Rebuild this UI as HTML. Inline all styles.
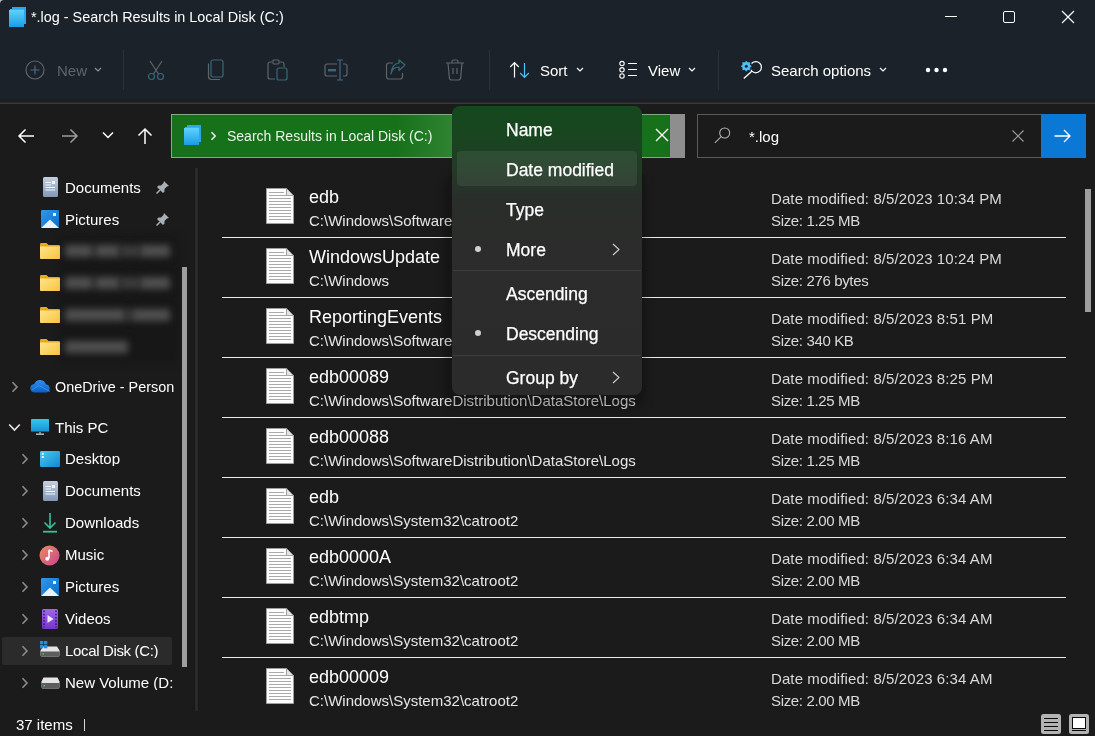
<!DOCTYPE html>
<html><head><meta charset="utf-8"><style>
html,body{margin:0;padding:0;width:1095px;height:736px;overflow:hidden;background:#1b1b1b;font-family:"Liberation Sans", sans-serif}
.t{position:absolute;white-space:nowrap;will-change:transform}
svg{display:block}
</style></head><body>
<div style="position:absolute;left:0;top:0;width:1095px;height:103px;background:#1c2229"></div><div style="position:absolute;left:0;top:99px;width:1095px;height:3px;background:#1c2024"></div><div style="position:absolute;left:0;top:102px;width:1095px;height:1px;background:#25292c"></div><div style="position:absolute;left:0;top:103px;width:1095px;height:1px;background:#373a3d"></div><svg style="position:absolute;left:8px;top:6px" width="20" height="22" viewBox="0 0 20 22">
<defs><linearGradient id="gb" x1="0" y1="0" x2="0" y2="1"><stop offset="0" stop-color="#5fd3fb"/><stop offset="1" stop-color="#1a9be6"/></linearGradient></defs>
<rect x="4" y="1" width="14" height="17" fill="#2aa6ea"/>
<rect x="2" y="3" width="14" height="17" fill="#37b3f0"/>
<rect x="1" y="4" width="15" height="17" fill="url(#gb)"/>
</svg><div class="t" style="left:31px;top:10.41px;font-size:14.4px;line-height:14.4px;color:#ffffff;">*.log - Search Results in Local Disk (C:)</div>
<div style="position:absolute;left:945px;top:16px;width:12px;height:1px;background:#fff"></div><div style="position:absolute;left:1003px;top:11px;width:10px;height:10px;border:1px solid #fff;border-radius:2px"></div><svg style="position:absolute;left:1061px;top:10px" width="14" height="14" viewBox="0 0 14 14"><path d="M1 1L13 13M13 1L1 13" stroke="#fff" stroke-width="1.2"/></svg><svg style="position:absolute;left:25px;top:60px" width="20" height="20" viewBox="0 0 20 20"><circle cx="10" cy="10" r="9" fill="none" stroke="#5f656c" stroke-width="1.2"/><path d="M10 5.5V14.5M5.5 10H14.5" stroke="#4b6b80" stroke-width="1.2"/></svg><div class="t" style="left:57px;top:62.70px;font-size:15px;line-height:15px;color:#5f656c;">New</div>
<svg style="position:absolute;left:94px;top:67px" width="8" height="5" viewBox="0 0 8 5"><path d="M1 1L4 4L7 1" fill="none" stroke="#8a9098" stroke-width="1.2"/></svg><div style="position:absolute;left:123px;top:50px;width:1px;height:40px;background:#2c3138"></div><svg style="position:absolute;left:146px;top:59px" width="20" height="22" viewBox="0 0 20 22"><path d="M4 2L12.5 15M16 2L7.5 15" stroke="#5f656c" stroke-width="1.2" fill="none"/><circle cx="5.5" cy="17.5" r="3" stroke="#356a7a" stroke-width="1.2" fill="none"/><circle cx="14.5" cy="17.5" r="3" stroke="#356a7a" stroke-width="1.2" fill="none"/></svg><svg style="position:absolute;left:207px;top:59px" width="18" height="22" viewBox="0 0 18 22"><rect x="4" y="1" width="12" height="17" rx="2" stroke="#356a7a" stroke-width="1.2" fill="none"/><path d="M1.5 4.5V17.5A3 3 0 0 0 4.5 20.5H13" stroke="#5f656c" stroke-width="1.2" fill="none"/></svg><svg style="position:absolute;left:267px;top:59px" width="22" height="22" viewBox="0 0 22 22"><path d="M5 3H3A2 2 0 0 0 1 5V18A2 2 0 0 0 3 20H8" stroke="#5f656c" stroke-width="1.2" fill="none"/><path d="M13 3H15A2 2 0 0 1 17 5V8" stroke="#5f656c" stroke-width="1.2" fill="none"/><rect x="6" y="1" width="6" height="4" rx="1" stroke="#5f656c" stroke-width="1.2" fill="none"/><rect x="10" y="9" width="10" height="12" rx="2" stroke="#356a7a" stroke-width="1.2" fill="none"/></svg><svg style="position:absolute;left:324px;top:59px" width="24" height="22" viewBox="0 0 24 22"><path d="M13 5H3A2 2 0 0 0 1 7V15A2 2 0 0 0 3 17H13" stroke="#5f656c" stroke-width="1.2" fill="none"/><path d="M19 5H21A2 2 0 0 1 23 7V15A2 2 0 0 1 21 17H19" stroke="#5f656c" stroke-width="1.2" fill="none"/><path d="M16 1V21M13 1H19M13 21H19" stroke="#3f6a8a" stroke-width="1.2"/><rect x="4" y="10" width="8" height="2.4" fill="#356a7a"/></svg><svg style="position:absolute;left:385px;top:59px" width="22" height="22" viewBox="0 0 22 22"><path d="M8 4H4A2.5 2.5 0 0 0 1.5 6.5V17.5A2.5 2.5 0 0 0 4 20H15A2.5 2.5 0 0 0 17.5 17.5V14" stroke="#5f656c" stroke-width="1.2" fill="none"/><path d="M6 15C7 10 10 8 14 8V11.5L20 6L14 1V4C9 4.5 6.5 8.5 6 15Z" stroke="#356a7a" stroke-width="1.2" fill="none" stroke-linejoin="round"/></svg><svg style="position:absolute;left:445px;top:59px" width="20" height="22" viewBox="0 0 20 22"><path d="M1 4H19M7 4V2.5A1.5 1.5 0 0 1 8.5 1H11.5A1.5 1.5 0 0 1 13 2.5V4" stroke="#5f656c" stroke-width="1.2" fill="none"/><path d="M3 4L4.3 18.5A2.5 2.5 0 0 0 6.8 21H13.2A2.5 2.5 0 0 0 15.7 18.5L17 4" stroke="#5f656c" stroke-width="1.2" fill="none"/><path d="M8 9V15M12 9V15" stroke="#5f656c" stroke-width="1.2"/></svg><div style="position:absolute;left:489px;top:50px;width:1px;height:40px;background:#2c3138"></div><svg style="position:absolute;left:509px;top:61px" width="24" height="18" viewBox="0 0 24 18"><path d="M5.5 16.5V1.6M1.2 6L5.5 1.5L9.8 6" stroke="#ffffff" stroke-width="1.2" fill="none"/><path d="M15.5 2V16.4M11.2 12L15.5 16.5L19.8 12" stroke="#4cc2ff" stroke-width="1.2" fill="none"/></svg><div class="t" style="left:540px;top:62.70px;font-size:15px;line-height:15px;color:#ffffff;">Sort</div>
<svg style="position:absolute;left:576px;top:67px" width="8" height="5" viewBox="0 0 8 5"><path d="M1 1L4 4L7 1" fill="none" stroke="#ffffff" stroke-width="1.2"/></svg><svg style="position:absolute;left:618px;top:60px" width="20" height="20" viewBox="0 0 20 20"><circle cx="4" cy="3.6" r="2.2" stroke="#fff" stroke-width="1.1" fill="none"/><circle cx="4" cy="9.8" r="2.2" stroke="#fff" stroke-width="1.1" fill="none"/><circle cx="4" cy="16" r="2.2" stroke="#fff" stroke-width="1.1" fill="none"/><path d="M10 3.5H19M10 9.5H19M10 15.5H19" stroke="#fff" stroke-width="1"/></svg><div class="t" style="left:648px;top:62.70px;font-size:15px;line-height:15px;color:#ffffff;">View</div>
<svg style="position:absolute;left:688px;top:67px" width="8" height="5" viewBox="0 0 8 5"><path d="M1 1L4 4L7 1" fill="none" stroke="#ffffff" stroke-width="1.2"/></svg><div style="position:absolute;left:718px;top:50px;width:1px;height:40px;background:#2c3138"></div><svg style="position:absolute;left:740px;top:59px" width="24" height="22" viewBox="0 0 24 22"><circle cx="15.8" cy="8.2" r="5.6" stroke="#fff" stroke-width="1.2" fill="none"/><path d="M11.8 12.3L3.8 19.5" stroke="#fff" stroke-width="1.3"/><circle cx="6.3" cy="7.2" r="6" fill="#1c2229"/><path d="M6.30 2.20L7.68 3.87L9.84 3.66L9.63 5.82L11.30 7.20L9.63 8.58L9.84 10.74L7.68 10.53L6.30 12.20L4.92 10.53L2.76 10.74L2.97 8.58L1.30 7.20L2.97 5.82L2.76 3.66L4.92 3.87Z" fill="#4cc2ff" stroke="#4cc2ff" stroke-width="0.8" stroke-linejoin="round"/><circle cx="6.3" cy="7.2" r="1.5" fill="#1c2229"/></svg><div class="t" style="left:771px;top:62.70px;font-size:15px;line-height:15px;color:#ffffff;">Search options</div>
<svg style="position:absolute;left:879px;top:67px" width="8" height="5" viewBox="0 0 8 5"><path d="M1 1L4 4L7 1" fill="none" stroke="#ffffff" stroke-width="1.2"/></svg><svg style="position:absolute;left:925px;top:67px" width="23" height="6" viewBox="0 0 23 6"><circle cx="3" cy="3" r="2.2" fill="#fff"/><circle cx="11.5" cy="3" r="2.2" fill="#fff"/><circle cx="20" cy="3" r="2.2" fill="#fff"/></svg><div style="position:absolute;left:0;top:104px;width:1095px;height:632px;background:#1b1b1b"></div><svg style="position:absolute;left:17px;top:127px" width="18" height="18" viewBox="0 0 18 18"><path d="M17 9H2M8.5 2.5L2 9L8.5 15.5" stroke="#fff" stroke-width="1.5" fill="none"/></svg><svg style="position:absolute;left:61px;top:127px" width="18" height="18" viewBox="0 0 18 18"><path d="M1 9H16M9.5 2.5L16 9L9.5 15.5" stroke="#9c9c9c" stroke-width="1.5" fill="none"/></svg><svg style="position:absolute;left:102px;top:131px" width="12" height="8" viewBox="0 0 12 8"><path d="M1 1.5L6 6.5L11 1.5" stroke="#fff" stroke-width="1.5" fill="none"/></svg><svg style="position:absolute;left:136px;top:127px" width="18" height="18" viewBox="0 0 18 18"><path d="M9 17V2M2.5 8.5L9 2L15.5 8.5" stroke="#fff" stroke-width="1.5" fill="none"/></svg><div style="position:absolute;left:171px;top:114px;width:514px;height:44px;background:#8e8e8e;box-sizing:border-box"></div><div style="position:absolute;left:171px;top:114px;width:499px;height:44px;background:#17701a;box-sizing:border-box;border:1px solid #86a886;border-right:none"></div><div style="position:absolute;left:395px;top:115px;width:57px;height:42px;background:linear-gradient(90deg,rgba(110,180,110,0) 0%,rgba(110,180,110,0.28) 100%)"></div><svg style="position:absolute;left:183px;top:124px" width="20" height="22" viewBox="0 0 20 22">
<rect x="4" y="1" width="14" height="17" fill="#2aa6ea"/>
<rect x="2" y="3" width="14" height="17" fill="#37b3f0"/>
<rect x="1" y="4" width="15" height="17" fill="url(#gb)"/>
</svg><svg style="position:absolute;left:210px;top:131px" width="8" height="10" viewBox="0 0 8 10"><path d="M1.5 1.3L5.2 5L1.5 8.7" stroke="#f0f0f0" stroke-width="1.5" fill="none"/></svg><div class="t" style="left:227px;top:128.55px;font-size:14px;line-height:14px;color:#e8f6e8;">Search Results in Local Disk (C:)</div>
<svg style="position:absolute;left:655px;top:128px" width="14" height="14" viewBox="0 0 14 14"><path d="M1 1L13 13M13 1L1 13" stroke="#fff" stroke-width="1.4"/></svg><div style="position:absolute;left:697px;top:114px;width:344px;height:44px;box-sizing:border-box;border:1px solid #5a5a5a;border-right:none;background:#1b1b1b"></div><svg style="position:absolute;left:713px;top:127px" width="18" height="17" viewBox="0 0 18 17"><circle cx="11.7" cy="6" r="5" stroke="#b0b0b0" stroke-width="1.1" fill="none"/><path d="M8.2 9.6L1.8 15.8" stroke="#b0b0b0" stroke-width="1.1"/></svg><div class="t" style="left:748.5px;top:129.30px;font-size:15px;line-height:15px;color:#ffffff;">*.log</div>
<svg style="position:absolute;left:1012px;top:130px" width="12" height="12" viewBox="0 0 12 12"><path d="M0.5 0.5L11.5 11.5M11.5 0.5L0.5 11.5" stroke="#9a9a9a" stroke-width="1.2"/></svg><div style="position:absolute;left:1041px;top:114px;width:45px;height:44px;background:#0b78d6"></div><svg style="position:absolute;left:1054px;top:129px" width="17" height="14" viewBox="0 0 17 14"><path d="M0.5 7H16M10 1L16 7L10 13" stroke="#fff" stroke-width="1.3" fill="none"/></svg><div style="position:absolute;left:194px;top:168px;width:5px;height:543px;background:#171717"></div><div style="position:absolute;left:195px;top:168px;width:3px;height:543px;background:#2a2a2a"></div><svg style="position:absolute;left:43px;top:177px" width="15" height="20" viewBox="0 0 15 20"><defs><linearGradient id="gd177" x1="0" y1="0" x2="0" y2="1"><stop offset="0" stop-color="#c3d0df"/><stop offset="1" stop-color="#8497b3"/></linearGradient></defs><rect x="0" y="0" width="15" height="20" rx="1.5" fill="url(#gd177)"/><path d="M2.5 5.5H8M2.5 8H8M2.5 10.5H12M2.5 13H12" stroke="#f2f6fb" stroke-width="1.1"/><rect x="9" y="4" width="3" height="3" fill="#f2f6fb"/></svg><div class="t" style="left:65px;top:179.50px;font-size:15px;line-height:15px;color:#ffffff;">Documents</div>
<svg style="position:absolute;left:156px;top:180px" width="14" height="14" viewBox="0 0 14 14"><path d="M8 1L13 6L11 6.5L8.5 9L8.5 11.5L7 13L1 7L2.5 5.5L5 5.5L7.5 3L8 1Z" fill="#a9b0b5"/><path d="M4 10L0.5 13.5" stroke="#a9b0b5" stroke-width="1.5"/></svg><svg style="position:absolute;left:41px;top:210px" width="18" height="18" viewBox="0 0 18 18"><defs><linearGradient id="gp210" x1="0" y1="0" x2="1" y2="1"><stop offset="0" stop-color="#2b9af3"/><stop offset="1" stop-color="#0f6cc4"/></linearGradient></defs><rect x="0" y="0" width="18" height="18" rx="1.2" fill="url(#gp210)"/><path d="M0 18L9 9.5L18 18Z" fill="#e6f2fc"/><rect x="12" y="3" width="3" height="3" fill="#e6f2fc"/></svg><div class="t" style="left:65px;top:211.50px;font-size:15px;line-height:15px;color:#ffffff;">Pictures</div>
<svg style="position:absolute;left:156px;top:212px" width="14" height="14" viewBox="0 0 14 14"><path d="M8 1L13 6L11 6.5L8.5 9L8.5 11.5L7 13L1 7L2.5 5.5L5 5.5L7.5 3L8 1Z" fill="#a9b0b5"/><path d="M4 10L0.5 13.5" stroke="#a9b0b5" stroke-width="1.5"/></svg><div style="position:absolute;left:60px;top:236px;width:118px;height:126px;background:#171717;filter:blur(3px)"></div><svg style="position:absolute;left:40px;top:243px" width="20" height="16" viewBox="0 0 20 16"><defs><linearGradient id="gf243" x1="0" y1="0" x2="1" y2="1"><stop offset="0" stop-color="#ffe48a"/><stop offset="1" stop-color="#f7c441"/></linearGradient></defs><path d="M0 1.2A1.2 1.2 0 0 1 1.2 0H6.5L8.5 2H18.8A1.2 1.2 0 0 1 20 3.2V14.8A1.2 1.2 0 0 1 18.8 16H1.2A1.2 1.2 0 0 1 0 14.8Z" fill="#e9a91c"/><path d="M0 3.5H20V14.8A1.2 1.2 0 0 1 18.8 16H1.2A1.2 1.2 0 0 1 0 14.8Z" fill="url(#gf243)"/></svg><div style="position:absolute;left:65px;top:245px;width:28px;height:12px;background:#505050;filter:blur(3.5px)"></div><div style="position:absolute;left:95px;top:245px;width:25px;height:12px;background:#505050;filter:blur(3.5px)"></div><div style="position:absolute;left:120px;top:245px;width:20px;height:12px;background:#3c3c3c;filter:blur(3.5px)"></div><div style="position:absolute;left:140px;top:245px;width:30px;height:12px;background:#505050;filter:blur(3.5px)"></div><svg style="position:absolute;left:40px;top:275px" width="20" height="16" viewBox="0 0 20 16"><defs><linearGradient id="gf275" x1="0" y1="0" x2="1" y2="1"><stop offset="0" stop-color="#ffe48a"/><stop offset="1" stop-color="#f7c441"/></linearGradient></defs><path d="M0 1.2A1.2 1.2 0 0 1 1.2 0H6.5L8.5 2H18.8A1.2 1.2 0 0 1 20 3.2V14.8A1.2 1.2 0 0 1 18.8 16H1.2A1.2 1.2 0 0 1 0 14.8Z" fill="#e9a91c"/><path d="M0 3.5H20V14.8A1.2 1.2 0 0 1 18.8 16H1.2A1.2 1.2 0 0 1 0 14.8Z" fill="url(#gf275)"/></svg><div style="position:absolute;left:65px;top:277px;width:28px;height:12px;background:#505050;filter:blur(3.5px)"></div><div style="position:absolute;left:95px;top:277px;width:25px;height:12px;background:#505050;filter:blur(3.5px)"></div><div style="position:absolute;left:120px;top:277px;width:20px;height:12px;background:#3c3c3c;filter:blur(3.5px)"></div><div style="position:absolute;left:140px;top:277px;width:30px;height:12px;background:#505050;filter:blur(3.5px)"></div><svg style="position:absolute;left:40px;top:307px" width="20" height="16" viewBox="0 0 20 16"><defs><linearGradient id="gf307" x1="0" y1="0" x2="1" y2="1"><stop offset="0" stop-color="#ffe48a"/><stop offset="1" stop-color="#f7c441"/></linearGradient></defs><path d="M0 1.2A1.2 1.2 0 0 1 1.2 0H6.5L8.5 2H18.8A1.2 1.2 0 0 1 20 3.2V14.8A1.2 1.2 0 0 1 18.8 16H1.2A1.2 1.2 0 0 1 0 14.8Z" fill="#e9a91c"/><path d="M0 3.5H20V14.8A1.2 1.2 0 0 1 18.8 16H1.2A1.2 1.2 0 0 1 0 14.8Z" fill="url(#gf307)"/></svg><div style="position:absolute;left:65px;top:309px;width:61px;height:12px;background:#505050;filter:blur(3.5px)"></div><div style="position:absolute;left:126px;top:309px;width:6px;height:12px;background:#3c3c3c;filter:blur(3.5px)"></div><div style="position:absolute;left:132px;top:309px;width:38px;height:12px;background:#505050;filter:blur(3.5px)"></div><svg style="position:absolute;left:40px;top:339px" width="20" height="16" viewBox="0 0 20 16"><defs><linearGradient id="gf339" x1="0" y1="0" x2="1" y2="1"><stop offset="0" stop-color="#ffe48a"/><stop offset="1" stop-color="#f7c441"/></linearGradient></defs><path d="M0 1.2A1.2 1.2 0 0 1 1.2 0H6.5L8.5 2H18.8A1.2 1.2 0 0 1 20 3.2V14.8A1.2 1.2 0 0 1 18.8 16H1.2A1.2 1.2 0 0 1 0 14.8Z" fill="#e9a91c"/><path d="M0 3.5H20V14.8A1.2 1.2 0 0 1 18.8 16H1.2A1.2 1.2 0 0 1 0 14.8Z" fill="url(#gf339)"/></svg><div style="position:absolute;left:65px;top:341px;width:63px;height:12px;background:#505050;filter:blur(3.5px)"></div><div style="position:absolute;left:182px;top:267px;width:5px;height:400px;background:#9e9e9e"></div><svg style="position:absolute;left:11px;top:381px" width="8" height="12" viewBox="0 0 8 12"><path d="M1.5 1.2L6 6L1.5 10.8" stroke="#8c8c8c" stroke-width="1.6" fill="none"/></svg><svg style="position:absolute;left:30px;top:379px" width="21" height="14" viewBox="0 0 21 14"><defs><linearGradient id="god" x1="0" y1="0" x2="0" y2="1"><stop offset="0" stop-color="#2f8ef0"/><stop offset="1" stop-color="#0d5fc2"/></linearGradient></defs><path d="M4.8 13.5A4.3 4.3 0 0 1 4.3 4.9A6.2 6.2 0 0 1 16 5.6A4 4 0 0 1 16.6 13.5Z" fill="url(#god)"/><path d="M2 11L9 6.5L20 12.5" stroke="#3f9cf5" stroke-width="1" fill="none" opacity="0.7"/></svg><div class="t" style="left:55px;top:380.11px;font-size:14.4px;line-height:14.4px;color:#ffffff;width:121px;overflow:hidden">OneDrive - Person</div>
<svg style="position:absolute;left:8px;top:423px" width="13" height="9" viewBox="0 0 13 9"><path d="M1.2 1.5L6.5 7L11.8 1.5" stroke="#e6e6e6" stroke-width="1.7" fill="none"/></svg><svg style="position:absolute;left:31px;top:419px" width="18" height="17" viewBox="0 0 18 17"><defs><linearGradient id="gpc" x1="0" y1="0" x2="0" y2="1"><stop offset="0" stop-color="#35c6f0"/><stop offset="1" stop-color="#1590d2"/></linearGradient></defs><rect x="0" y="0" width="18" height="13" rx="0.8" fill="url(#gpc)"/><rect x="0" y="12" width="18" height="1" fill="#0f5f9a"/><rect x="8.3" y="13" width="1.4" height="1.6" fill="#9fb4c4"/><rect x="5" y="14.5" width="8" height="1.3" fill="#c8d4dc"/></svg><div class="t" style="left:55px;top:419.50px;font-size:15px;line-height:15px;color:#ffffff;">This PC</div>
<div style="position:absolute;left:2px;top:637px;width:170px;height:28px;background:#2b2b2b;border-radius:2px"></div><svg style="position:absolute;left:21px;top:453px" width="8" height="12" viewBox="0 0 8 12"><path d="M1.5 1.2L6 6L1.5 10.8" stroke="#8c8c8c" stroke-width="1.6" fill="none"/></svg><div class="t" style="left:65px;top:451.30px;font-size:15px;line-height:15px;color:#ffffff;width:110px;overflow:hidden">Desktop</div>
<svg style="position:absolute;left:21px;top:485px" width="8" height="12" viewBox="0 0 8 12"><path d="M1.5 1.2L6 6L1.5 10.8" stroke="#8c8c8c" stroke-width="1.6" fill="none"/></svg><div class="t" style="left:65px;top:483.30px;font-size:15px;line-height:15px;color:#ffffff;width:110px;overflow:hidden">Documents</div>
<svg style="position:absolute;left:21px;top:517px" width="8" height="12" viewBox="0 0 8 12"><path d="M1.5 1.2L6 6L1.5 10.8" stroke="#8c8c8c" stroke-width="1.6" fill="none"/></svg><div class="t" style="left:65px;top:515.30px;font-size:15px;line-height:15px;color:#ffffff;width:110px;overflow:hidden">Downloads</div>
<svg style="position:absolute;left:21px;top:549px" width="8" height="12" viewBox="0 0 8 12"><path d="M1.5 1.2L6 6L1.5 10.8" stroke="#8c8c8c" stroke-width="1.6" fill="none"/></svg><div class="t" style="left:65px;top:547.30px;font-size:15px;line-height:15px;color:#ffffff;width:110px;overflow:hidden">Music</div>
<svg style="position:absolute;left:21px;top:581px" width="8" height="12" viewBox="0 0 8 12"><path d="M1.5 1.2L6 6L1.5 10.8" stroke="#8c8c8c" stroke-width="1.6" fill="none"/></svg><div class="t" style="left:65px;top:579.30px;font-size:15px;line-height:15px;color:#ffffff;width:110px;overflow:hidden">Pictures</div>
<svg style="position:absolute;left:21px;top:613px" width="8" height="12" viewBox="0 0 8 12"><path d="M1.5 1.2L6 6L1.5 10.8" stroke="#8c8c8c" stroke-width="1.6" fill="none"/></svg><div class="t" style="left:65px;top:611.30px;font-size:15px;line-height:15px;color:#ffffff;width:110px;overflow:hidden">Videos</div>
<svg style="position:absolute;left:21px;top:645px" width="8" height="12" viewBox="0 0 8 12"><path d="M1.5 1.2L6 6L1.5 10.8" stroke="#8c8c8c" stroke-width="1.6" fill="none"/></svg><div class="t" style="left:65px;top:643.30px;font-size:15px;line-height:15px;color:#ffffff;width:110px;overflow:hidden;letter-spacing:-0.35px">Local Disk (C:)</div>
<svg style="position:absolute;left:21px;top:677px" width="8" height="12" viewBox="0 0 8 12"><path d="M1.5 1.2L6 6L1.5 10.8" stroke="#8c8c8c" stroke-width="1.6" fill="none"/></svg><div class="t" style="left:65px;top:675.30px;font-size:15px;line-height:15px;color:#ffffff;width:110px;overflow:hidden">New Volume (D:</div>
<svg style="position:absolute;left:40px;top:451px" width="20" height="16" viewBox="0 0 20 16"><defs><linearGradient id="gdt" x1="0" y1="0" x2="1" y2="1"><stop offset="0" stop-color="#46cbf3"/><stop offset="1" stop-color="#1486d0"/></linearGradient></defs><rect x="0" y="0" width="20" height="16" rx="1.2" fill="url(#gdt)"/><rect x="1.8" y="1.8" width="2" height="2" fill="#e8f7fd"/><rect x="1.8" y="5" width="2" height="2" fill="#e8f7fd"/></svg><svg style="position:absolute;left:43px;top:481px" width="15" height="20" viewBox="0 0 15 20"><defs><linearGradient id="gd481" x1="0" y1="0" x2="0" y2="1"><stop offset="0" stop-color="#c3d0df"/><stop offset="1" stop-color="#8497b3"/></linearGradient></defs><rect x="0" y="0" width="15" height="20" rx="1.5" fill="url(#gd481)"/><path d="M2.5 5.5H8M2.5 8H8M2.5 10.5H12M2.5 13H12" stroke="#f2f6fb" stroke-width="1.1"/><rect x="9" y="4" width="3" height="3" fill="#f2f6fb"/></svg><svg style="position:absolute;left:42px;top:512px" width="16" height="21" viewBox="0 0 16 21"><path d="M8 1V16M2.5 10.5L8 16L13.5 10.5" stroke="#33c29c" stroke-width="1.6" fill="none"/><path d="M1 19.7H15" stroke="#33c29c" stroke-width="1.8"/></svg><svg style="position:absolute;left:39px;top:545px" width="21" height="21" viewBox="0 0 21 21"><defs><linearGradient id="gm" x1="0" y1="0" x2="1" y2="1"><stop offset="0" stop-color="#f08a5d"/><stop offset="1" stop-color="#c2488e"/></linearGradient></defs><circle cx="10.5" cy="10.5" r="10" fill="url(#gm)"/><path d="M10 5V13.5" stroke="#fff" stroke-width="1.6"/><circle cx="8.3" cy="13.8" r="2" fill="#fff"/><path d="M10 5L13.5 6.5" stroke="#fff" stroke-width="1.6"/></svg><svg style="position:absolute;left:41px;top:578px" width="18" height="18" viewBox="0 0 18 18"><defs><linearGradient id="gp578" x1="0" y1="0" x2="1" y2="1"><stop offset="0" stop-color="#2b9af3"/><stop offset="1" stop-color="#0f6cc4"/></linearGradient></defs><rect x="0" y="0" width="18" height="18" rx="1.2" fill="url(#gp578)"/><path d="M0 18L9 9.5L18 18Z" fill="#e6f2fc"/><rect x="12" y="3" width="3" height="3" fill="#e6f2fc"/></svg><svg style="position:absolute;left:42px;top:609px" width="16" height="20" viewBox="0 0 16 20"><defs><linearGradient id="gv" x1="0" y1="0" x2="0" y2="1"><stop offset="0" stop-color="#a066ee"/><stop offset="1" stop-color="#7436c8"/></linearGradient></defs><rect x="0" y="0" width="16" height="20" rx="1.5" fill="url(#gv)"/><path d="M2 1.5V18.5M14 1.5V18.5" stroke="#3d1a78" stroke-width="1.6" stroke-dasharray="1.6 1.6"/><path d="M5.5 6L11.5 10L5.5 14Z" fill="#f0e6ff"/></svg><svg style="position:absolute;left:40px;top:641px" width="20" height="16" viewBox="0 0 20 16"><path d="M3 5.5H17L19.5 9.5V14A1.5 1.5 0 0 1 18 15.5H2A1.5 1.5 0 0 1 0.5 14V9.5Z" fill="#e4e4e4"/><path d="M0.5 10.5H19.5V14A1.5 1.5 0 0 1 18 15.5H2A1.5 1.5 0 0 1 0.5 14Z" fill="#5d5d5d"/><rect x="2.5" y="12.3" width="1.5" height="1.3" fill="#5fd35f"/><rect x="0" y="0" width="3.3" height="3.3" fill="#1e8fe8"/><rect x="4" y="0" width="3.3" height="3.3" fill="#1e8fe8"/><rect x="0" y="4" width="3.3" height="3.3" fill="#1e8fe8"/><rect x="4" y="4" width="3.3" height="3.3" fill="#1e8fe8"/></svg><svg style="position:absolute;left:41px;top:677px" width="19" height="12" viewBox="0 0 19 12"><path d="M2.5 0.5H16.5L18.5 4.5V10A1.5 1.5 0 0 1 17 11.5H2A1.5 1.5 0 0 1 0.5 10V4.5Z" fill="#e4e4e4"/><path d="M0.5 6H18.5V10A1.5 1.5 0 0 1 17 11.5H2A1.5 1.5 0 0 1 0.5 10Z" fill="#5d5d5d"/><rect x="2.5" y="8" width="1.5" height="1.3" fill="#5fd35f"/></svg><div style="position:absolute;left:197px;top:168px;width:898px;height:542px;overflow:hidden"><div style="position:absolute;left:-197px;top:-168px;width:1095px;height:736px"><svg style="position:absolute;left:266px;top:188px" width="28" height="36" viewBox="0 0 28 36"><path d="M0.5 0.5H20.5L27.5 7.5V35.5H0.5Z" fill="#fdfdfd" stroke="#a0a0a0" stroke-width="1"/><path d="M20.5 0.5V7.5H27.5Z" fill="#e4e4e4" stroke="#a0a0a0" stroke-width="1"/><path d="M3 4.5H18M3 7.5H25M3 10.5H25M3 13.5H25M3 16.5H25M3 19.5H25M3 22.5H25M3 25.5H25M3 28.5H25M3 31.5H25" stroke="#a9a9a9" stroke-width="1"/></svg><div class="t" style="left:309px;top:188.26px;font-size:18px;line-height:18px;color:#ffffff;">edb</div>
<div class="t" style="left:309px;top:213.30px;font-size:15px;line-height:15px;color:#e6e6e6;">C:\Windows\SoftwareDistribution\DataStore\Logs</div>
<div class="t" style="left:771px;top:191.30px;font-size:15px;line-height:15px;color:#dadada;letter-spacing:0.1px">Date modified: 8/5/2023 10:34 PM</div>
<div class="t" style="left:771px;top:212.70px;font-size:15px;line-height:15px;color:#dadada;letter-spacing:-0.35px">Size: 1.25 MB</div>
<div style="position:absolute;left:222px;top:237px;width:844px;height:1px;background:#ececec"></div><svg style="position:absolute;left:266px;top:248px" width="28" height="36" viewBox="0 0 28 36"><path d="M0.5 0.5H20.5L27.5 7.5V35.5H0.5Z" fill="#fdfdfd" stroke="#a0a0a0" stroke-width="1"/><path d="M20.5 0.5V7.5H27.5Z" fill="#e4e4e4" stroke="#a0a0a0" stroke-width="1"/><path d="M3 4.5H18M3 7.5H25M3 10.5H25M3 13.5H25M3 16.5H25M3 19.5H25M3 22.5H25M3 25.5H25M3 28.5H25M3 31.5H25" stroke="#a9a9a9" stroke-width="1"/></svg><div class="t" style="left:309px;top:248.26px;font-size:18px;line-height:18px;color:#ffffff;">WindowsUpdate</div>
<div class="t" style="left:309px;top:273.30px;font-size:15px;line-height:15px;color:#e6e6e6;">C:\Windows</div>
<div class="t" style="left:771px;top:251.30px;font-size:15px;line-height:15px;color:#dadada;letter-spacing:0.1px">Date modified: 8/5/2023 10:24 PM</div>
<div class="t" style="left:771px;top:272.70px;font-size:15px;line-height:15px;color:#dadada;letter-spacing:-0.35px">Size: 276 bytes</div>
<div style="position:absolute;left:222px;top:297px;width:844px;height:1px;background:#ececec"></div><svg style="position:absolute;left:266px;top:308px" width="28" height="36" viewBox="0 0 28 36"><path d="M0.5 0.5H20.5L27.5 7.5V35.5H0.5Z" fill="#fdfdfd" stroke="#a0a0a0" stroke-width="1"/><path d="M20.5 0.5V7.5H27.5Z" fill="#e4e4e4" stroke="#a0a0a0" stroke-width="1"/><path d="M3 4.5H18M3 7.5H25M3 10.5H25M3 13.5H25M3 16.5H25M3 19.5H25M3 22.5H25M3 25.5H25M3 28.5H25M3 31.5H25" stroke="#a9a9a9" stroke-width="1"/></svg><div class="t" style="left:309px;top:308.26px;font-size:18px;line-height:18px;color:#ffffff;">ReportingEvents</div>
<div class="t" style="left:309px;top:333.30px;font-size:15px;line-height:15px;color:#e6e6e6;">C:\Windows\SoftwareDistribution</div>
<div class="t" style="left:771px;top:311.30px;font-size:15px;line-height:15px;color:#dadada;letter-spacing:0.1px">Date modified: 8/5/2023 8:51 PM</div>
<div class="t" style="left:771px;top:332.70px;font-size:15px;line-height:15px;color:#dadada;letter-spacing:-0.35px">Size: 340 KB</div>
<div style="position:absolute;left:222px;top:357px;width:844px;height:1px;background:#ececec"></div><svg style="position:absolute;left:266px;top:368px" width="28" height="36" viewBox="0 0 28 36"><path d="M0.5 0.5H20.5L27.5 7.5V35.5H0.5Z" fill="#fdfdfd" stroke="#a0a0a0" stroke-width="1"/><path d="M20.5 0.5V7.5H27.5Z" fill="#e4e4e4" stroke="#a0a0a0" stroke-width="1"/><path d="M3 4.5H18M3 7.5H25M3 10.5H25M3 13.5H25M3 16.5H25M3 19.5H25M3 22.5H25M3 25.5H25M3 28.5H25M3 31.5H25" stroke="#a9a9a9" stroke-width="1"/></svg><div class="t" style="left:309px;top:368.26px;font-size:18px;line-height:18px;color:#ffffff;">edb00089</div>
<div class="t" style="left:309px;top:393.30px;font-size:15px;line-height:15px;color:#e6e6e6;">C:\Windows\SoftwareDistribution\DataStore\Logs</div>
<div class="t" style="left:771px;top:371.30px;font-size:15px;line-height:15px;color:#dadada;letter-spacing:0.1px">Date modified: 8/5/2023 8:25 PM</div>
<div class="t" style="left:771px;top:392.70px;font-size:15px;line-height:15px;color:#dadada;letter-spacing:-0.35px">Size: 1.25 MB</div>
<div style="position:absolute;left:222px;top:417px;width:844px;height:1px;background:#ececec"></div><svg style="position:absolute;left:266px;top:428px" width="28" height="36" viewBox="0 0 28 36"><path d="M0.5 0.5H20.5L27.5 7.5V35.5H0.5Z" fill="#fdfdfd" stroke="#a0a0a0" stroke-width="1"/><path d="M20.5 0.5V7.5H27.5Z" fill="#e4e4e4" stroke="#a0a0a0" stroke-width="1"/><path d="M3 4.5H18M3 7.5H25M3 10.5H25M3 13.5H25M3 16.5H25M3 19.5H25M3 22.5H25M3 25.5H25M3 28.5H25M3 31.5H25" stroke="#a9a9a9" stroke-width="1"/></svg><div class="t" style="left:309px;top:428.26px;font-size:18px;line-height:18px;color:#ffffff;">edb00088</div>
<div class="t" style="left:309px;top:453.30px;font-size:15px;line-height:15px;color:#e6e6e6;">C:\Windows\SoftwareDistribution\DataStore\Logs</div>
<div class="t" style="left:771px;top:431.30px;font-size:15px;line-height:15px;color:#dadada;letter-spacing:0.1px">Date modified: 8/5/2023 8:16 AM</div>
<div class="t" style="left:771px;top:452.70px;font-size:15px;line-height:15px;color:#dadada;letter-spacing:-0.35px">Size: 1.25 MB</div>
<div style="position:absolute;left:222px;top:477px;width:844px;height:1px;background:#ececec"></div><svg style="position:absolute;left:266px;top:488px" width="28" height="36" viewBox="0 0 28 36"><path d="M0.5 0.5H20.5L27.5 7.5V35.5H0.5Z" fill="#fdfdfd" stroke="#a0a0a0" stroke-width="1"/><path d="M20.5 0.5V7.5H27.5Z" fill="#e4e4e4" stroke="#a0a0a0" stroke-width="1"/><path d="M3 4.5H18M3 7.5H25M3 10.5H25M3 13.5H25M3 16.5H25M3 19.5H25M3 22.5H25M3 25.5H25M3 28.5H25M3 31.5H25" stroke="#a9a9a9" stroke-width="1"/></svg><div class="t" style="left:309px;top:488.26px;font-size:18px;line-height:18px;color:#ffffff;">edb</div>
<div class="t" style="left:309px;top:513.30px;font-size:15px;line-height:15px;color:#e6e6e6;">C:\Windows\System32\catroot2</div>
<div class="t" style="left:771px;top:491.30px;font-size:15px;line-height:15px;color:#dadada;letter-spacing:0.1px">Date modified: 8/5/2023 6:34 AM</div>
<div class="t" style="left:771px;top:512.70px;font-size:15px;line-height:15px;color:#dadada;letter-spacing:-0.35px">Size: 2.00 MB</div>
<div style="position:absolute;left:222px;top:537px;width:844px;height:1px;background:#ececec"></div><svg style="position:absolute;left:266px;top:548px" width="28" height="36" viewBox="0 0 28 36"><path d="M0.5 0.5H20.5L27.5 7.5V35.5H0.5Z" fill="#fdfdfd" stroke="#a0a0a0" stroke-width="1"/><path d="M20.5 0.5V7.5H27.5Z" fill="#e4e4e4" stroke="#a0a0a0" stroke-width="1"/><path d="M3 4.5H18M3 7.5H25M3 10.5H25M3 13.5H25M3 16.5H25M3 19.5H25M3 22.5H25M3 25.5H25M3 28.5H25M3 31.5H25" stroke="#a9a9a9" stroke-width="1"/></svg><div class="t" style="left:309px;top:548.26px;font-size:18px;line-height:18px;color:#ffffff;">edb0000A</div>
<div class="t" style="left:309px;top:573.30px;font-size:15px;line-height:15px;color:#e6e6e6;">C:\Windows\System32\catroot2</div>
<div class="t" style="left:771px;top:551.30px;font-size:15px;line-height:15px;color:#dadada;letter-spacing:0.1px">Date modified: 8/5/2023 6:34 AM</div>
<div class="t" style="left:771px;top:572.70px;font-size:15px;line-height:15px;color:#dadada;letter-spacing:-0.35px">Size: 2.00 MB</div>
<div style="position:absolute;left:222px;top:597px;width:844px;height:1px;background:#ececec"></div><svg style="position:absolute;left:266px;top:608px" width="28" height="36" viewBox="0 0 28 36"><path d="M0.5 0.5H20.5L27.5 7.5V35.5H0.5Z" fill="#fdfdfd" stroke="#a0a0a0" stroke-width="1"/><path d="M20.5 0.5V7.5H27.5Z" fill="#e4e4e4" stroke="#a0a0a0" stroke-width="1"/><path d="M3 4.5H18M3 7.5H25M3 10.5H25M3 13.5H25M3 16.5H25M3 19.5H25M3 22.5H25M3 25.5H25M3 28.5H25M3 31.5H25" stroke="#a9a9a9" stroke-width="1"/></svg><div class="t" style="left:309px;top:608.26px;font-size:18px;line-height:18px;color:#ffffff;">edbtmp</div>
<div class="t" style="left:309px;top:633.30px;font-size:15px;line-height:15px;color:#e6e6e6;">C:\Windows\System32\catroot2</div>
<div class="t" style="left:771px;top:611.30px;font-size:15px;line-height:15px;color:#dadada;letter-spacing:0.1px">Date modified: 8/5/2023 6:34 AM</div>
<div class="t" style="left:771px;top:632.70px;font-size:15px;line-height:15px;color:#dadada;letter-spacing:-0.35px">Size: 2.00 MB</div>
<div style="position:absolute;left:222px;top:657px;width:844px;height:1px;background:#ececec"></div><svg style="position:absolute;left:266px;top:668px" width="28" height="36" viewBox="0 0 28 36"><path d="M0.5 0.5H20.5L27.5 7.5V35.5H0.5Z" fill="#fdfdfd" stroke="#a0a0a0" stroke-width="1"/><path d="M20.5 0.5V7.5H27.5Z" fill="#e4e4e4" stroke="#a0a0a0" stroke-width="1"/><path d="M3 4.5H18M3 7.5H25M3 10.5H25M3 13.5H25M3 16.5H25M3 19.5H25M3 22.5H25M3 25.5H25M3 28.5H25M3 31.5H25" stroke="#a9a9a9" stroke-width="1"/></svg><div class="t" style="left:309px;top:668.26px;font-size:18px;line-height:18px;color:#ffffff;">edb00009</div>
<div class="t" style="left:309px;top:693.30px;font-size:15px;line-height:15px;color:#e6e6e6;">C:\Windows\System32\catroot2</div>
<div class="t" style="left:771px;top:671.30px;font-size:15px;line-height:15px;color:#dadada;letter-spacing:0.1px">Date modified: 8/5/2023 6:34 AM</div>
<div class="t" style="left:771px;top:692.70px;font-size:15px;line-height:15px;color:#dadada;letter-spacing:-0.35px">Size: 2.00 MB</div>
</div></div><div style="position:absolute;left:1075px;top:168px;width:20px;height:540px;background:#1b1b1b"></div><div style="position:absolute;left:1085px;top:189px;width:6px;height:123px;background:#9e9e9e"></div><svg style="position:absolute;left:0;top:0" width="5" height="5" viewBox="0 0 5 5"><path d="M0 0H4A4 4 0 0 0 0 4Z" fill="#c9c9c9"/></svg><div class="t" style="left:16px;top:716.80px;font-size:15px;line-height:15px;color:#ffffff;">37 items</div>
<div style="position:absolute;left:84px;top:719px;width:1px;height:12px;background:#d8d8d8"></div><svg style="position:absolute;left:1041px;top:714px" width="20" height="20" viewBox="0 0 20 20"><rect x="0" y="0" width="20" height="20" rx="2.5" fill="#b3b3b3"/><path d="M3 4.5H17M3 8.5H17M3 12.5H17M3 16.5H17" stroke="#0a0a0a" stroke-width="1"/></svg><svg style="position:absolute;left:1069px;top:714px" width="20" height="20" viewBox="0 0 20 20"><rect x="0" y="0" width="20" height="20" rx="2.5" fill="#b3b3b3"/><rect x="3.5" y="3.5" width="13" height="11" fill="#ffffff" stroke="#0a0a0a" stroke-width="1"/><path d="M3 16.5H17" stroke="#0a0a0a" stroke-width="1"/></svg><div style="position:absolute;left:449px;top:170px;width:196px;height:230px;border-radius:10px;box-shadow:-2px 6px 12px rgba(0,0,0,0.4);background:rgba(0,0,0,0.2)"></div><div style="position:absolute;left:452px;top:106px;width:190px;height:289px;border-radius:8px;background:linear-gradient(180deg,#15481d 0%,#194520 11%,#223b26 22%,#292e2a 32%,#2b2c2b 50%,#2b2b2b 100%);box-sizing:border-box"></div><div style="position:absolute;left:457px;top:151px;width:180px;height:35px;border-radius:4px;background:rgba(255,255,255,0.075)"></div><div class="t" style="left:506px;top:122.09px;font-size:17.5px;line-height:17.5px;color:#ffffff;-webkit-text-stroke:0.25px #fff">Name</div>
<div class="t" style="left:506px;top:162.09px;font-size:17.5px;line-height:17.5px;color:#ffffff;-webkit-text-stroke:0.25px #fff">Date modified</div>
<div class="t" style="left:506px;top:202.09px;font-size:17.5px;line-height:17.5px;color:#ffffff;-webkit-text-stroke:0.25px #fff">Type</div>
<div class="t" style="left:506px;top:242.09px;font-size:17.5px;line-height:17.5px;color:#ffffff;-webkit-text-stroke:0.25px #fff">More</div>
<div style="position:absolute;left:475px;top:246px;width:6px;height:6px;border-radius:3px;background:#d0d0d0"></div><svg style="position:absolute;left:612px;top:243px" width="8" height="13" viewBox="0 0 8 13"><path d="M1 1L7 6.5L1 12" stroke="#cfcfcf" stroke-width="1.1" fill="none"/></svg><div style="position:absolute;left:453px;top:270px;width:188px;height:1px;background:#3c3e3c"></div><div class="t" style="left:506px;top:286.09px;font-size:17.5px;line-height:17.5px;color:#ffffff;-webkit-text-stroke:0.25px #fff">Ascending</div>
<div class="t" style="left:506px;top:326.09px;font-size:17.5px;line-height:17.5px;color:#ffffff;-webkit-text-stroke:0.25px #fff">Descending</div>
<div style="position:absolute;left:475px;top:330px;width:6px;height:6px;border-radius:3px;background:#d0d0d0"></div><div style="position:absolute;left:453px;top:355px;width:188px;height:1px;background:#3c3e3c"></div><div class="t" style="left:506px;top:369.59px;font-size:17.5px;line-height:17.5px;color:#ffffff;-webkit-text-stroke:0.25px #fff">Group by</div>
<svg style="position:absolute;left:612px;top:371px" width="8" height="13" viewBox="0 0 8 13"><path d="M1 1L7 6.5L1 12" stroke="#cfcfcf" stroke-width="1.1" fill="none"/></svg>
</body></html>
